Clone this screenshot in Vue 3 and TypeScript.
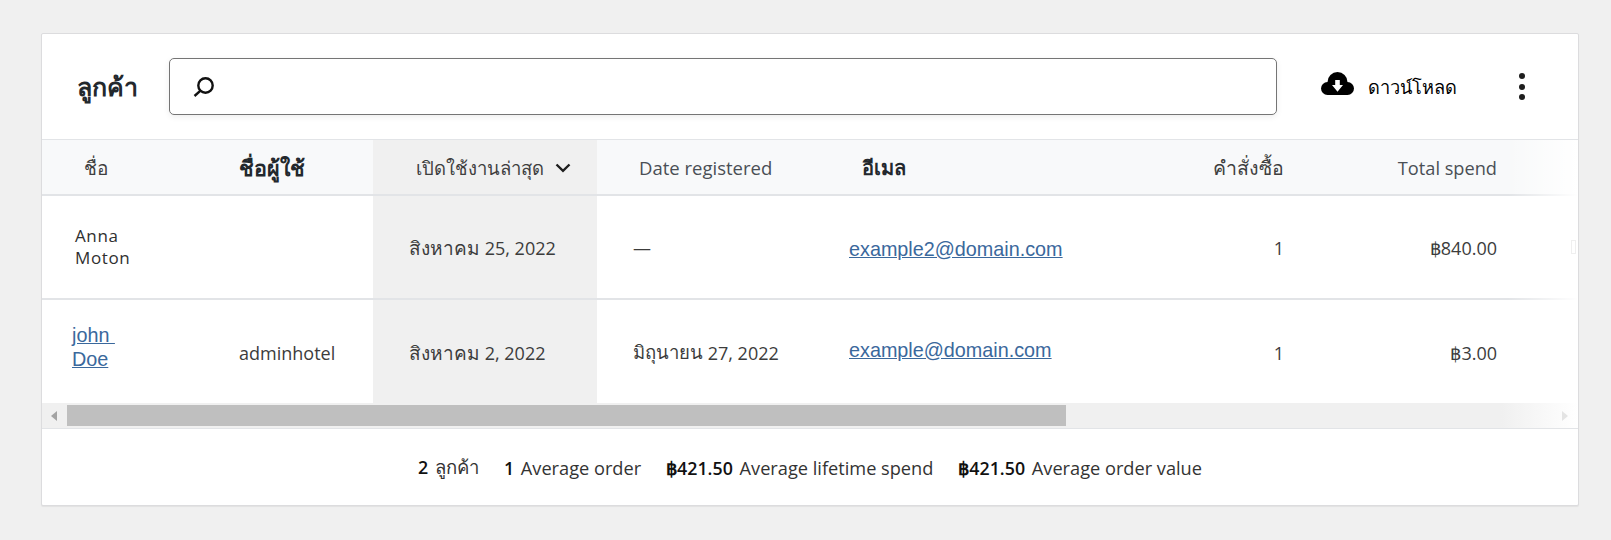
<script setup lang="ts">
interface Row { nameLink: boolean; user: string; thaiDate: string; dateRest: string; regThai: string; regRest: string; email: string; orders: string; total: string; ghost: boolean }
const rows: Row[] = [
  { nameLink: false, user: '', thaiDate: 'สิงหาคม', dateRest: ' 25, 2022', regThai: '', regRest: '—', email: 'example2@domain.com', orders: '1', total: '฿840.00', ghost: true },
  { nameLink: true, user: 'adminhotel', thaiDate: 'สิงหาคม', dateRest: ' 2, 2022', regThai: 'มิถุนายน', regRest: ' 27, 2022', email: 'example@domain.com', orders: '1', total: '฿3.00', ghost: false },
]
</script>

<template>
  <div class="page">
    <section class="card">
      <header class="top">
        <h1 class="title">ลูกค้า</h1>
        <div class="search">
          <svg class="search-icon" viewBox="0 0 24 24" width="24" height="24" aria-hidden="true">
            <circle cx="14.500" cy="10.500" r="7.200" fill="none" stroke="#111" stroke-width="2.400" />
            <path d="M9.500 15.700 3.500 21" fill="none" stroke="#111" stroke-width="2.400" />
          </svg>
        </div>
        <button class="download">
          <svg viewBox="0 0 33 23" width="33" height="23" aria-hidden="true">
            <circle cx="6.500" cy="16.500" r="6.500" fill="#000" />
            <circle cx="26.500" cy="16.500" r="6.500" fill="#000" />
            <circle cx="16.500" cy="10" r="10" fill="#000" />
            <rect x="6.500" y="13" width="20" height="10" fill="#000" />
            <path d="M14.200 8h4.600v5H22l-5.500 6.700L11 13h3.200Z" fill="#fff" />
          </svg>
          <span>ดาวน์โหลด</span>
        </button>
        <div class="dots" aria-hidden="true"><i></i><i></i><i></i></div>
      </header>

      <div class="table">
        <div class="cell head c1"><span class="h1">ชื่อ</span></div>
        <div class="cell head c2 strong">ชื่อผู้ใช้</div>
        <div class="cell head c3 sorted">
          <span>เปิดใช้งานล่าสุด</span>
          <svg viewBox="0 0 16 10" width="16" height="10" aria-hidden="true"><path d="M1.500 1.500 8 7.800l6.500-6.300" fill="none" stroke="#1e1e1e" stroke-width="2.400" /></svg>
        </div>
        <div class="cell head c4"><span class="h4 latin">Date registered</span></div>
        <div class="cell head c5 strong"><span class="h5">อีเมล</span></div>
        <div class="cell head c6 right">คำสั่งซื้อ</div>
        <div class="cell head c7 right latin">Total spend</div>
        <div class="cell head c8"></div>

        <template v-for="(r, i) in rows" :key="i">
          <div class="cell c1">
            <a v-if="r.nameLink" class="link name-link" href="#">john&nbsp;<br />Doe</a>
            <span v-else class="plain-name">Anna<br />Moton</span>
          </div>
          <div class="cell c2 body">{{ r.user }}</div>
          <div class="cell c3 sorted body"><span class="thai">{{ r.thaiDate }}</span><span class="rest">{{ r.dateRest }}</span></div>
          <div class="cell c4 body"><span class="thai">{{ r.regThai }}</span><span class="rest">{{ r.regRest }}</span></div>
          <div class="cell c5"><a class="link mail" :class="{ lift: i === 1 }" href="#">{{ r.email }}</a></div>
          <div class="cell c6 right body">{{ r.orders }}</div>
          <div class="cell c7 right body">{{ r.total }}</div>
          <div class="cell c8"><span v-if="r.ghost" class="ghost"></span></div>
        </template>
        <div class="fade" aria-hidden="true"></div>
      </div>

      <div class="scrollbar" aria-hidden="true">
        <span class="arrow left"></span>
        <div class="track"><div class="thumb"></div></div>
        <span class="arrow rgt"></span>
      </div>

      <footer class="summary">
        <span><b>2</b> <span class="thai-foot">ลูกค้า</span></span>
        <span><b>1</b> Average order</span>
        <span><b>฿421.50</b> Average lifetime spend</span>
        <span><b>฿421.50</b> Average order value</span>
      </footer>
    </section>
  </div>
</template>

<style>
html, body { margin: 0; background: #f0f0f0; }
</style>

<style scoped>
.page {
  height: 540px;
  box-sizing: border-box;
  padding: 33px 0 0 41px;
  background: #f0f0f0;
  font-family: "Open Sans", "Noto Sans", sans-serif;
  color: #2f2f2f;
  overflow: hidden;
}
.card {
  width: 1538px;
  height: 473px;
  box-sizing: border-box;
  background: #fff;
  border: 1px solid #dcdcde;
  border-radius: 2px;
  box-shadow: 0 1px 1px rgba(0, 0, 0, 0.06);
  display: flex;
  flex-direction: column;
}
.top {
  height: 106px;
  flex: none;
  box-sizing: border-box;
  display: flex;
  align-items: center;
  padding-left: 35px;
  border-bottom: 1px solid #e2e4e7;
}
.title {
  margin: 0;
  width: 92px;
  flex: none;
  font-size: 25px;
  font-weight: 700;
  color: #23282d;
  white-space: nowrap;
}
.search {
  width: 1108px;
  height: 57px;
  flex: none;
  box-sizing: border-box;
  border: 1px solid #757575;
  border-radius: 5px;
  display: flex;
  align-items: center;
  padding-left: 21px;
  box-shadow: 0 2px 6px rgba(0, 0, 0, 0.07);
}
.download {
  margin-left: 44px;
  display: flex;
  align-items: center;
  gap: 14px;
  border: 0;
  background: none;
  padding: 0;
  font: inherit;
  font-size: 18.200px;
  color: #000;
  white-space: nowrap;
}
.download span { padding-top: 2px; }
.download svg { margin-top: -6px; }
.dots {
  margin-left: 62px;
  display: flex;
  flex-direction: column;
  gap: 4.700px;
}
.dots i {
  display: block;
  width: 6px;
  height: 6px;
  border-radius: 50%;
  background: #1e1e1e;
}
.table {
  position: relative;
  display: grid;
  grid-template-columns: 183px 148px 224px 240px 293px 154px 213px 81px;
  grid-template-rows: 56px 104px 103px;
  flex: none;
  overflow: hidden;
}
.cell {
  display: flex;
  align-items: center;
  box-sizing: border-box;
  border-bottom: 2px solid #e2e4e7;
  min-width: 0;
  white-space: nowrap;
}
.table > .cell:nth-last-child(-n+9) { border-bottom: 0; }
.head {
  background: #f8f9fa;
  font-size: 19.500px;
  color: #3f3f3f;
  padding-top: 2px;
}
.head.c1 { font-size: 19px; }
.head.c3 { font-size: 18.500px; }
.latin { font-size: 18.500px; color: #4a4f55; }
.head.c4 { padding-top: 0; }
.head.c7.latin { font-size: 18.200px; }
.head.strong { font-weight: 700; color: #23282d; font-size: 21.500px; }
.head.c5 { font-size: 20px; }
.body { font-size: 18px; color: #3c3c3c; padding-top: 2px; }
.thai { font-size: 19px; }
.c4 .thai { font-size: 18.500px; }
.rest { white-space: pre; }
.sorted, .head.sorted { background: #f0f0f0; }
.c1 { padding-left: 32px; }
.c2 { padding-left: 14px; }
.c3 { padding-left: 36px; }
.head.c3 { padding-left: 43px; gap: 11px; }
.c4 { padding-left: 36px; }
.c5 { padding-left: 12px; }
.right { justify-content: flex-end; }
.h1 { margin-left: 10px; }
.h4 { margin-left: 6px; }
.h5 { margin-left: 13px; }
.plain-name {
  margin-left: 1px;
  font-size: 17px;
  line-height: 22px;
  letter-spacing: 0.6px;
  color: #2f2f2f;
}
.link { color: #3a689c; text-decoration: underline; font-family: "Liberation Sans", sans-serif; font-size: 19.800px; }
.mail { padding-top: 4px; }
.name-link { margin-left: -2px; margin-top: -10px; line-height: 24px; white-space: pre; }
.lift { margin-top: -7px; }
.ghost {
  position: relative;
  z-index: 1;
  margin-left: 74px;
  width: 5px;
  height: 14px;
  box-sizing: border-box;
  border: 1px solid #efefef;
}
.fade {
  position: absolute;
  top: 0;
  right: 0;
  bottom: 0;
  width: 70px;
  background: linear-gradient(to right, rgba(255, 255, 255, 0), #fff);
}
.scrollbar {
  height: 26px;
  flex: none;
  box-sizing: border-box;
  display: flex;
  align-items: center;
  background: linear-gradient(to right, #f0f0f0 95%, #fff);
  border-bottom: 1px solid #e2e4e7;
}
.track { flex: 1; height: 100%; padding: 2px 0; box-sizing: border-box; }
.thumb { width: 999px; height: 100%; background: #bfbfbf; }
.arrow {
  width: 0;
  height: 0;
  border-top: 5px solid transparent;
  border-bottom: 5px solid transparent;
}
.arrow.left { border-right: 6px solid #a3a3a3; margin: 0 10px 0 9px; }
.arrow.rgt { border-left: 6px solid #e4e4e4; margin: 0 10px 0 6px; }
.summary {
  flex: 1;
  display: flex;
  justify-content: center;
  align-items: center;
  gap: 25px;
  font-size: 18.200px;
  color: #333;
  white-space: nowrap;
  padding-top: 1px;
}
.summary b { font-weight: 600; font-size: 17.800px; color: #111; margin-right: 2px; }
.thai-foot { font-size: 18.500px; }
</style>
